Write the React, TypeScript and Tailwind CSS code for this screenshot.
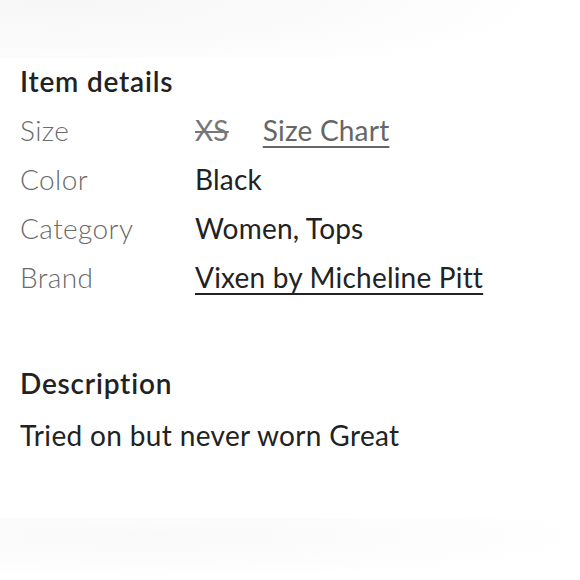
import React from "react";

export default function App() {
  const rows: { label: string; value: React.ReactNode }[] = [
    {
      label: "Size",
      value: (
        <span className="flex items-baseline gap-[34px]">
          <span className="text-[#777] line-through decoration-[1.5px]">XS</span>
          <span className="text-[#666] underline decoration-[1.5px] underline-offset-[5px]">Size Chart</span>
        </span>
      ),
    },
    { label: "Color", value: <span className="text-[#222]">Black</span> },
    { label: "Category", value: <span className="text-[#222]">Women, Tops</span> },
    {
      label: "Brand",
      value: (
        <span className="text-[#222] underline decoration-[1.5px] underline-offset-[5px]">
          Vixen by Micheline Pitt
        </span>
      ),
    },
  ];

  return (
    <div
      className="relative w-[580px] h-[580px] overflow-hidden bg-white"
      style={{ fontFamily: "Lato, 'Noto Sans', sans-serif" }}
    >
      <div className="absolute left-0 top-0 w-[580px] h-[58px] bg-[radial-gradient(ellipse_85%_140%_at_10%_0%,#f7f7f7_0%,#fafafa_50%,#ffffff_100%)]" />
      <div className="absolute left-0 top-[518px] w-[580px] h-[62px] bg-[radial-gradient(ellipse_80%_70%_at_25%_30%,#f9f9f9_0%,#fcfcfc_55%,#ffffff_100%)]" />

      <div className="relative flex flex-col pl-[20px] pt-[63px] tracking-[0.2px]">
        <h2 className="text-[28px] leading-[36px] font-semibold tracking-[0.8px] text-[#222]">Item details</h2>
        <div className="mt-[6px] flex flex-col">
          {rows.map((r) => (
            <div key={r.label} className="flex h-[49px] items-center text-[28px] font-normal">
              <span className="w-[175px] text-[#6a6a6a] font-light tracking-[0.4px]">{r.label}</span>
              {r.value}
            </div>
          ))}
        </div>
        <h2 className="mt-[64px] text-[28px] leading-[36px] font-semibold tracking-[0.8px] text-[#222]">Description</h2>
        <p className="mt-[16px] text-[28px] leading-[36px] font-normal tracking-[0.35px] text-[#222]">Tried on but never worn Great</p>
      </div>
    </div>
  );
}
